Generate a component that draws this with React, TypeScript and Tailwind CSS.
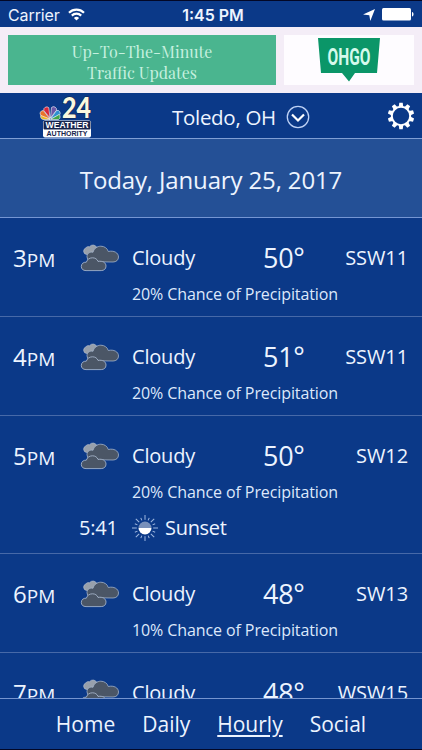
interface IHour {
  hour: string;
  temp: string;
  wind: string;
  rain: string;
  sunset?: string;
}

const hours: IHour[] = [
  { hour: "3", temp: "50°", wind: "SSW11", rain: "20%" },
  { hour: "4", temp: "51°", wind: "SSW11", rain: "20%" },
  { hour: "5", temp: "50°", wind: "SW12", rain: "20%", sunset: "5:41" },
  { hour: "6", temp: "48°", wind: "SW13", rain: "10%" },
  { hour: "7", temp: "48°", wind: "WSW15", rain: "10%" },
];

const tabs = ["Home", "Daily", "Hourly", "Social"];

const CloudIcon = () => (
  <svg width="40" height="30" viewBox="0 0 40 30" className="shrink-0">
    <path
      d="M6.500 11.500a3.400 3.400 0 0 1-1-6.400 3.800 3.800 0 0 1 4-1.400 4.400 4.400 0 0 1 7.300 .6c3 .3 3.800 3.200 2.300 5.200l-8 3z"
      fill="#98a0ab"
      stroke="#b7c3d6"
      strokeWidth=".6"
    />
    <path
      d="M10.500 18.700a5 5 0 0 1-3.500-5c0-3.400 3-5.200 6-4.400 1-3.800 4.200-6.100 7.800-6.100 3.700 0 6.500 2.100 7.500 5.300 5.500-1.300 10.200 1.200 10.200 5.500 0 3.100-2.300 5-5.500 5z"
      fill="#4b5666"
      stroke="#a5b4ca"
      strokeWidth=".8"
    />
    <path
      d="M6 27.600c-3 0-4.700-1.700-4.700-4.200 0-2.800 2.200-4.400 5-4.200 1-3 3.400-4.400 6.200-4.400 2.700 0 4.600 1.300 5.500 3.600 4.600-.8 8 1.200 8 4.700 0 2.800-2 4.500-4.800 4.500z"
      fill="#4b5666"
      stroke="#b0bfd5"
      strokeWidth=".8"
    />
  </svg>
);

const rays = [0, 22.5, 45, 67.5, 90, 112.5, 135, 157.5, 180, 202.5, 225, 247.5, 270, 292.5, 315, 337.5];

const SunsetIcon = () => (
  <svg width="28" height="28" viewBox="0 0 28 28" className="shrink-0">
    {rays.map((angle, index) => (
      <line
        key={angle}
        x1="14"
        y1="5.800"
        x2="14"
        y2={index % 2 ? 3 : 1}
        transform={`rotate(${angle} 14 14)`}
        stroke="#9fb8e0"
        strokeWidth="1"
      />
    ))}
    <path d="M7.500 14a6.500 6.500 0 0 1 13 0z" fill="#7890ba" />
    <path d="M7.500 14a6.500 6.500 0 0 0 13 0z" fill="#fff" />
  </svg>
);

const teeth = [0, 36, 72, 108, 144, 180, 216, 252, 288, 324];

const GearIcon = () => (
  <svg width="28" height="28" viewBox="0 0 28 28">
    <circle cx="14" cy="14" r="9.200" fill="none" stroke="#fff" strokeWidth="2" />
    {teeth.map((angle) => (
      <path
        key={angle}
        d="M11.700 5 12.300.8h3.400l.6 4.200z"
        fill="#fff"
        transform={`rotate(${angle} 14 14)`}
      />
    ))}
  </svg>
);

const Logo = () => (
  <svg width="54" height="44" viewBox="0 0 54 44" overflow="visible">
    <g stroke="#fff" strokeWidth=".6">
      <path d="M12 23.500H5a3 3 0 0 1-1-5.500z" fill="#e9b72b" />
      <path d="M12 23 3 19.500a2.800 2.800 0 0 1 2.500-4.800z" fill="#e8722c" />
      <path d="M12 22 5.800 14.500a3 3 0 0 1 5-2.800z" fill="#d8283c" />
      <path d="M12.500 22 13.500 11.500a3 3 0 0 1 5 2.800z" fill="#6b56a8" />
      <path d="M12.500 23 18.500 14.500a2.800 2.800 0 0 1 3 4.500z" fill="#2d8fd0" />
      <path d="M12.500 23.500 21 18.500a3 3 0 0 1-.5 5z" fill="#3fa64b" />
    </g>
    <text
      x="24"
      y="22"
      fontFamily="Lato, sans-serif"
      fontSize="29"
      fontWeight="900"
      textLength="29"
      lengthAdjust="spacingAndGlyphs"
      fill="#fbf8df"
      stroke="#17254d"
      strokeWidth="1.200"
      paintOrder="stroke"
    >
      24
    </text>
    <rect x="5" y="24.500" width="48" height="17" rx="2" fill="#fff" />
    <rect x="5.500" y="25" width="47" height="8.500" rx="1" fill="#17254d" />
    <text
      x="7.500"
      y="32.300"
      fontFamily="Liberation Sans, sans-serif"
      fontSize="8.700"
      fontWeight="700"
      textLength="43"
      lengthAdjust="spacingAndGlyphs"
      fill="#fff"
    >
      WEATHER
    </text>
    <text
      x="8.500"
      y="40.400"
      fontFamily="Liberation Sans, sans-serif"
      fontSize="8"
      fontWeight="700"
      textLength="41"
      lengthAdjust="spacingAndGlyphs"
      fill="#17254d"
    >
      AUTHORITY
    </text>
  </svg>
);

const StatusBar = () => (
  <div className="grid h-[27px] shrink-0 grid-cols-[1fr_auto_1fr] items-center border-t border-[#020726] pt-[1px] pr-2 pl-2 font-['Inter',sans-serif] text-[16px] leading-[22px]">
    <div className="flex items-center gap-[8px]">
      <span className="tracking-[-0.1px]">Carrier</span>
      <svg width="17" height="13" viewBox="0 0 17 13" fill="none" stroke="#fff" strokeWidth="2.200">
        <path d="M1 4.700a10.800 10.800 0 0 1 15 0M3.800 7.600a6.800 6.800 0 0 1 9.400 0" />
        <path d="M8.500 12.500 5.900 9.900a3.800 3.800 0 0 1 5.200 0z" fill="#fff" stroke="none" />
      </svg>
    </div>
    <span className="ml-[4px] font-semibold">1:45 PM</span>
    <div className="flex items-center justify-end gap-[7px]">
      <svg width="12" height="12" viewBox="0 0 12 12">
        <path d="M12 0 7.300 12 6.300 6.300 0 5.500z" fill="#fff" />
      </svg>
      <svg width="32" height="14" viewBox="0 0 32 14">
        <rect x="0" y="0" width="29" height="12.500" rx="1.500" fill="#fff" />
        <path d="M30 4c2 .3 2 4.200 0 4.500z" fill="#fff" />
      </svg>
    </div>
  </div>
);

const Banner = () => (
  <div className="flex h-[66px] shrink-0 gap-2 bg-[#f4edf7] py-2 pr-2 pl-2">
    <div className="flex h-[50px] w-[268px] flex-col items-center justify-center bg-[#4ab58f] pt-[3px] font-['Playfair_Display','Liberation_Serif',serif] text-[16px] leading-[21px] text-[#c5f0df]">
      <span>Up-To-The-Minute</span>
      <span>Traffic Updates</span>
    </div>
    <div className="flex h-[50px] w-[130px] justify-center bg-[#fefcff] pt-[3px]">
      <svg width="64" height="45" viewBox="0 0 64 45">
        <path d="M1 0h62l-3 35H38l-6 8.500L25 35H4z" fill="#0b9668" />
        <text
          x="10.500"
          y="26.500"
          fontFamily="Roboto, sans-serif"
          fontSize="24.500"
          fontWeight="700"
          textLength="43"
          lengthAdjust="spacingAndGlyphs"
          fill="#d5faec"
        >
          OHGO
        </text>
      </svg>
    </div>
  </div>
);

const HourRow = ({ item }: { item: IHour }) => (
  <div className="shrink-0 border-b border-[#4769a8] pt-[20px]">
    <div className="flex h-10 items-center">
      <div className="w-[80px] pl-[13px] text-[24px]">
        {item.hour}
        <span className="text-[19px]">PM</span>
      </div>
      <CloudIcon />
      <span className="w-[130px] pl-[12px] text-[20px] tracking-[-0.2px]">Cloudy</span>
      <span className="pl-[13px] text-[27px] tracking-[-0.3px]">{item.temp}</span>
      <span className="ml-auto pr-[14px] text-[20px] tracking-[-0.1px]">{item.wind}</span>
    </div>
    <p className="mt-[5px] pb-[11px] pl-[132px] text-[16px] leading-[22px] tracking-[-0.1px] text-[#dde8fb]">
      {item.rain} Chance of Precipitation
    </p>
    {item.sunset && (
      <div className="flex h-[39px] items-start">
        <span className="ml-[79px] w-[52px] text-[20px] leading-[28px] tracking-[-0.2px]">
          {item.sunset}
        </span>
        <SunsetIcon />
        <span className="pl-[6px] text-[20px] leading-[28px] tracking-[-0.3px]">Sunset</span>
      </div>
    )}
  </div>
);

export default function App() {
  return (
    <div className="flex h-[750px] w-[422px] flex-col overflow-hidden bg-[#0b3988] font-['Open_Sans','Noto_Sans',sans-serif] text-[#edf4ff]">
      <StatusBar />
      <Banner />
      <header className="flex h-[46px] shrink-0 items-center border-b border-[#7f9ed5] pl-[38px] pr-[7px]">
        <div className="mt-[5px] w-[134px]">
          <Logo />
        </div>
        <span className="w-[103px] pt-[2px] text-[20.5px] leading-[30px] tracking-[-0.3px] whitespace-nowrap">
          Toledo, OH
        </span>
        <svg width="24" height="24" viewBox="0 0 24 24" fill="none" className="mt-[2px] ml-[11px]">
          <circle cx="12" cy="12" r="10.700" stroke="#bdd1f5" strokeWidth="1.300" />
          <path d="m6 9.500 6 6 6-6" stroke="#fff" strokeWidth="2.200" />
        </svg>
        <div className="ml-auto">
          <GearIcon />
        </div>
      </header>
      <div className="flex h-[79px] shrink-0 items-center justify-center border-b border-[#7596d3] bg-[#245096] pt-[3px] text-[24px] tracking-[-0.14px]">
        Today, January 25, 2017
      </div>
      <main className="flex min-h-0 flex-1 flex-col overflow-hidden">
        {hours.map((item) => (
          <HourRow key={item.hour} item={item} />
        ))}
      </main>
      <nav className="flex h-[52px] shrink-0 items-center justify-center gap-[27px] border-t border-b border-t-[#7695cf] border-b-[#020726] text-[21px] leading-[30px]">
        {tabs.map((tab) => (
          <span
            key={tab}
            className={
              tab === "Hourly"
                ? "underline decoration-[1.5px] underline-offset-[3px]"
                : ""
            }
          >
            {tab}
          </span>
        ))}
      </nav>
    </div>
  );
}
